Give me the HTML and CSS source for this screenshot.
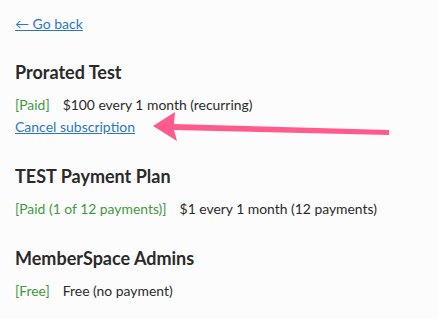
FILE: index.html
```html
<!DOCTYPE html>
<html lang="en">
<head>
    <meta charset="UTF-8">
    <meta name="viewport" content="width=device-width, initial-scale=1.0">
    <title>Subscriptions</title>
    <link rel="stylesheet" href="styles.css">
</head>
<body>
    <div class="page">
        <a class="back-link" href="#">&larr; Go back</a>

        <div class="plan">
            <h2 class="plan-name">Prorated Test</h2>
            <div class="plan-row">
                <span class="status">[Paid]</span>
                <span class="price">$100 every 1 month (recurring)</span>
            </div>
            <a class="cancel-link" href="#">Cancel subscription</a>
            <svg class="arrow" width="242" height="36" viewBox="0 0 242 36">
                <polygon points="3,17 25,3 24,15 239,21 239,26 24,21 27,32" fill="#ff5b8c"/>
            </svg>
        </div>

        <div class="plan">
            <h2 class="plan-name">TEST Payment Plan</h2>
            <div class="plan-row">
                <span class="status">[Paid (1 of 12 payments)]</span>
                <span class="price">$1 every 1 month (12 payments)</span>
            </div>
        </div>

        <div class="plan">
            <h2 class="plan-name">MemberSpace Admins</h2>
            <div class="plan-row">
                <span class="status">[Free]</span>
                <span class="price">Free (no payment)</span>
            </div>
        </div>
    </div>
</body>
</html>
```

FILE: styles.css
```css
*{
    margin:0;
    padding:0;
    box-sizing:border-box;
}
body{
    background-color:#fdfcfc;
    font-family:Lato,"Open Sans",sans-serif;
    color:#2b2b2b;
}
.page{
    padding:13px 15px 0 15px;
}
.back-link{
    display:inline-block;
    font-size:14px;
    line-height:18px;
    color:#2a78c2;
    text-decoration:underline;
}
.plan{
    position:relative;
    margin-top:27px;
}
.plan-name{
    font-size:18px;
    font-weight:700;
    line-height:24px;
    color:#2a2a2a;
}
.plan-row{
    display:flex;
    gap:13px;
    margin-top:11px;
    font-size:13.9px;
    line-height:20px;
}
.status{
    color:#3e9a3e;
}
.cancel-link{
    display:inline-block;
    margin-top:2px;
    font-size:14px;
    line-height:20px;
    color:#2a78c2;
    text-decoration:underline;
}
.arrow{
    position:absolute;
    left:135px;
    top:49px;
}
```
